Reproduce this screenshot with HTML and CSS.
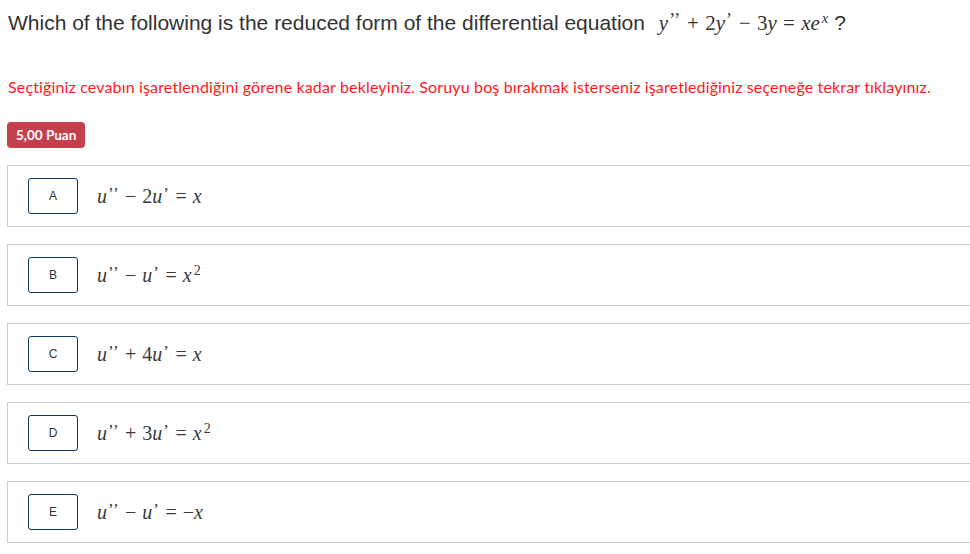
FILE: index.html
```html
<!DOCTYPE html>
<html lang="tr">
<head>
<meta charset="utf-8">
<title>Soru</title>
<link rel="stylesheet" href="styles.css">
</head>
<body>
<div class="page">
  <h1 class="question">Which of the following is the reduced form of the differential equation <span class="math"><i>y</i><span class="pr">’’</span><span class="op">+</span>2<i>y</i><span class="pr">’</span><span class="op">−</span>3<i>y</i><span class="op">=</span><i>xe</i><sup><i>x</i></sup></span> ?</h1>
  <p class="notice">Seçtiğiniz cevabın işaretlendiğini görene kadar bekleyiniz. Soruyu boş bırakmak isterseniz işaretlediğiniz seçeneğe tekrar tıklayınız.</p>
  <div class="badge">5,00 Puan</div>
  <div class="options">
    <div class="option"><div class="letter">A</div><span class="math"><i>u</i><span class="pr">’’</span><span class="op">−</span>2<i>u</i><span class="pr">’</span><span class="op">=</span><i>x</i></span></div>
    <div class="option"><div class="letter">B</div><span class="math"><i>u</i><span class="pr">’’</span><span class="op">−</span><i>u</i><span class="pr">’</span><span class="op">=</span><i>x</i><sup>2</sup></span></div>
    <div class="option"><div class="letter">C</div><span class="math"><i>u</i><span class="pr">’’</span><span class="op">+</span>4<i>u</i><span class="pr">’</span><span class="op">=</span><i>x</i></span></div>
    <div class="option"><div class="letter">D</div><span class="math"><i>u</i><span class="pr">’’</span><span class="op">+</span>3<i>u</i><span class="pr">’</span><span class="op">=</span><i>x</i><sup>2</sup></span></div>
    <div class="option"><div class="letter">E</div><span class="math"><i>u</i><span class="pr">’’</span><span class="op">−</span><i>u</i><span class="pr">’</span><span class="op">=</span>−<i>x</i></span></div>
  </div>
</div>
</body>
</html>
```
FILE: styles.css
```css
html, body {
  margin: 0;
  padding: 0;
  background: #fff;
  overflow: hidden;
}
.page {
  padding: 11px 0 0 7px;
  width: 990px;
}
.question {
  margin: 0 0 0 1px;
  height: 24px;
  font-family: "Liberation Sans", Arial, sans-serif;
  font-weight: normal;
  font-size: 21px;
  line-height: 24px;
  color: #333;
}
.question .math {
  margin-left: 8px;
  font-size: 21px;
  color: #333;
}
.math {
  font-family: "Liberation Serif", "Times New Roman", serif;
  font-size: 20px;
  line-height: 1;
  color: #3a3a3a;
  white-space: nowrap;
}
.math i {
  font-style: italic;
}
.math .pr {
  font-style: normal;
  font-size: 0.85em;
  line-height: 0;
  vertical-align: 0.25em;
  margin-left: 1px;
  letter-spacing: 0.5px;
}
.math .op {
  margin: 0 0.3em;
}
.math sup {
  font-size: 0.7em;
  line-height: 0;
  vertical-align: 0.5em;
  margin-left: 2px;
}
.notice {
  margin: 42px 0 0 1px;
  font-family: Lato, "Open Sans", sans-serif;
  font-size: 16px;
  line-height: 20px;
  letter-spacing: 0.15px;
  color: #ff1a1a;
}
.badge {
  width: max-content;
  margin-top: 25px;
  height: 26px;
  line-height: 26px;
  padding: 0 9px;
  background: #c5404d;
  color: #fff;
  border-radius: 4px;
  font-family: Lato, "Open Sans", sans-serif;
  font-weight: bold;
  font-size: 13.5px;
}
.options {
  margin-top: 17px;
  display: flex;
  flex-direction: column;
  gap: 17px;
}
.option {
  display: flex;
  align-items: center;
  height: 36px;
  padding: 12px 20px;
  border: 1px solid #ccc;
}
.letter {
  box-sizing: border-box;
  flex: none;
  width: 50px;
  height: 36px;
  border: 1px solid #0d3a5c;
  border-radius: 3px;
  display: flex;
  align-items: center;
  justify-content: center;
  font-family: "Liberation Sans", Arial, sans-serif;
  font-size: 12px;
  color: #333;
  margin-right: 19px;
}
```
